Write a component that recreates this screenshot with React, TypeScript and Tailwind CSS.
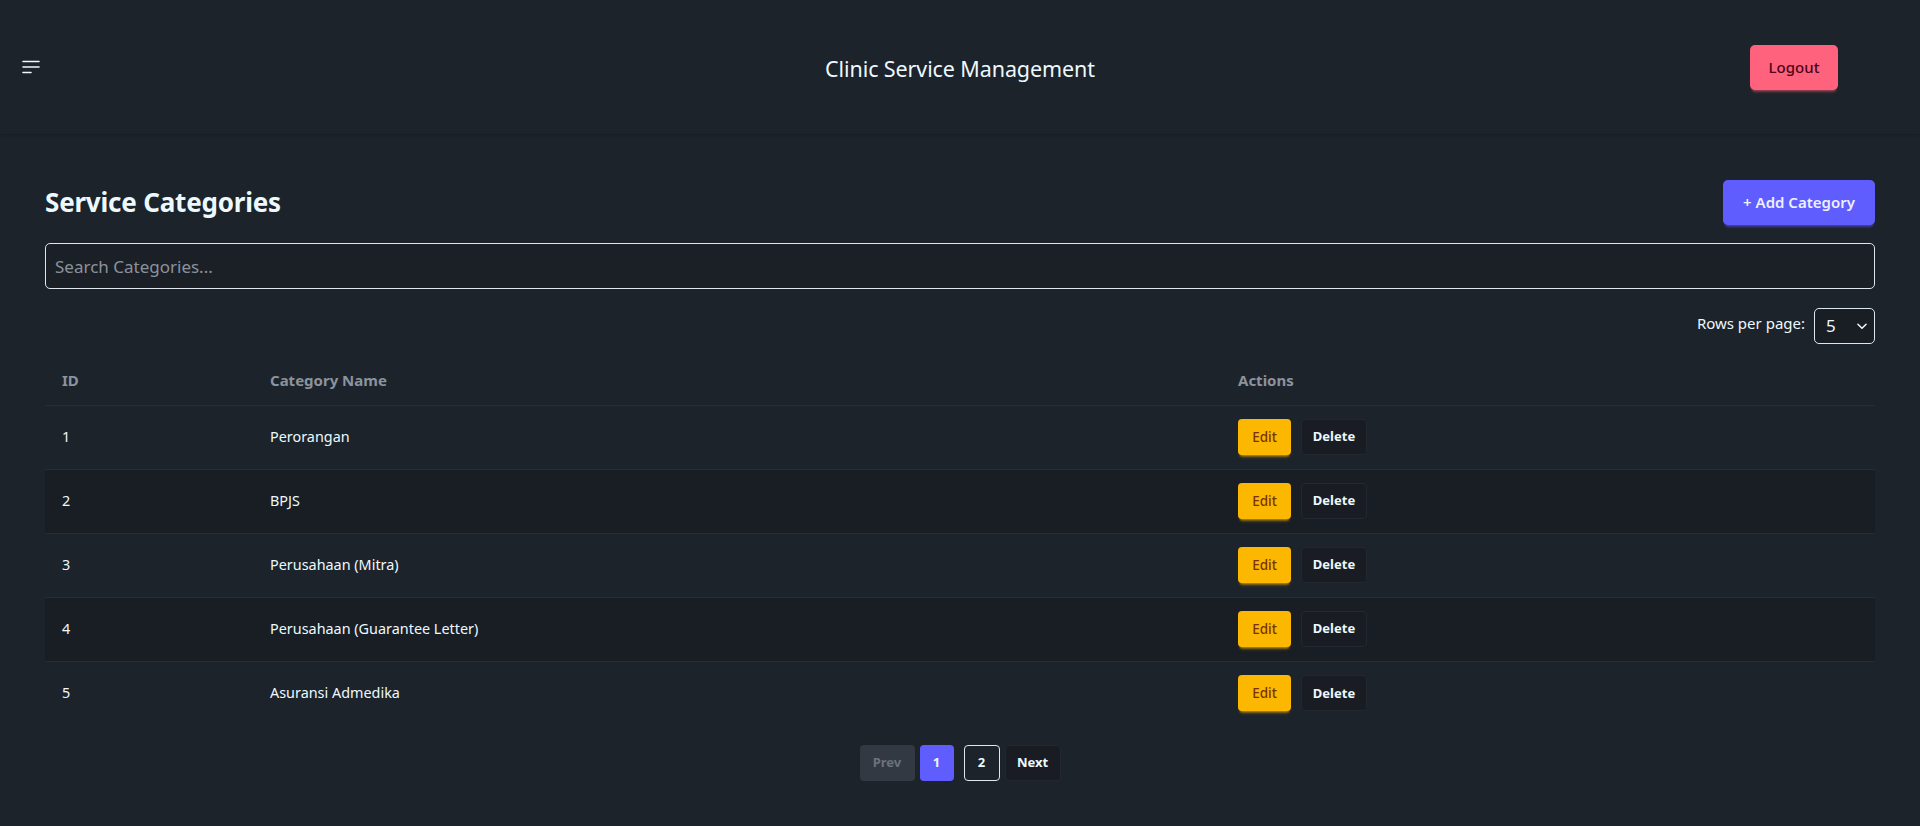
import React from "react";

const rows = [
  { id: 1, name: "Perorangan" },
  { id: 2, name: "BPJS" },
  { id: 3, name: "Perusahaan (Mitra)" },
  { id: 4, name: "Perusahaan (Guarantee Letter)" },
  { id: 5, name: "Asuransi Admedika" },
];

const App = () => {
  return (
    <div
      className="min-h-[826px] w-full bg-[#1d232a] text-[#ecf9ff]"
      style={{ fontFamily: '"Noto Sans", "Open Sans", sans-serif' }}
    >
      {/* NAVBAR */}
      <header className="relative z-10 flex h-[134px] items-center justify-between bg-[#1d232a] pl-[22px] pr-[82px] shadow-[0_1px_3px_rgba(0,0,0,0.2)]">
        <button className="flex h-[20px] w-[20px] items-center">
          <svg width="18" height="14" viewBox="0 0 18 14" fill="none">
            <path d="M1 1.5h16M1 7h16M1 12.5h8" stroke="#ecf9ff" strokeWidth="1.6" strokeLinecap="round" />
          </svg>
        </button>
        <h1 className="absolute left-1/2 top-[53px] -translate-x-1/2 text-[21.5px] font-normal tracking-[-0.1px]">
          Clinic Service Management
        </h1>
        <button className="h-[45px] w-[88px] rounded-[5px] bg-[#ff627d] text-[15px] font-medium text-[#4d0218] shadow-[0_3px_2px_-2px_rgba(255,98,125,0.35),0_4px_3px_-2px_rgba(255,98,125,0.35)]">
          Logout
        </button>
      </header>

      {/* CONTENT */}
      <main className="px-[45px] pt-[46px]">
        <div className="flex items-center justify-between">
          <h2 className="text-[26px] font-bold tracking-[-0.2px]">Service Categories</h2>
          <button className="h-[45px] w-[152px] rounded-[5px] bg-[#605dff] text-[15px] font-semibold text-[#edf1fe] shadow-[0_3px_2px_-2px_rgba(96,93,255,0.4),0_4px_3px_-2px_rgba(96,93,255,0.4)]">
            + Add Category
          </button>
        </div>

        <input
          type="text"
          placeholder="Search Categories..."
          className="mt-[18px] block h-[46px] w-full rounded-[5px] border border-[#dfe6ee] bg-[#1b2027] px-[9px] text-[17px] text-[#ecf9ff] outline-none placeholder:text-[#8b929c]"
        />

        <div className="mt-[19px] flex items-center justify-end gap-[9px]">
          <span className="mb-[6px] text-[15px]">Rows per page:</span>
          <div className="flex h-[36px] w-[61px] items-center justify-between rounded-[5px] border border-[#dfe6ee] bg-[#191e24] pl-[11px] pr-[5px]">
            <span className="text-[17px]">5</span>
            <svg width="14" height="14" viewBox="0 0 24 24" fill="none">
              <path d="M5 9l7 7 7-7" stroke="#ecf9ff" strokeWidth="2.6" strokeLinecap="round" strokeLinejoin="round" />
            </svg>
          </div>
        </div>

        {/* TABLE */}
        <table className="mt-[12px] w-full border-collapse text-left">
          <thead>
            <tr className="h-[49px] border-b border-[#272d35] text-[15px] font-bold text-[#8a939f]">
              <th className="w-[208px] px-[17px]">ID</th>
              <th className="w-[968px] px-[17px]">Category Name</th>
              <th className="px-[17px]">Actions</th>
            </tr>
          </thead>
          <tbody className="text-[14.4px]">
            {rows.map((r, i) => (
              <tr
                key={r.id}
                className={`h-[64px] ${i < rows.length - 1 ? "border-b border-[#272d35]" : ""} ${i % 2 === 1 ? "bg-[#191e24]" : "bg-[#1d232a]"}`}
              >
                <td className="px-[17px]">{r.id}</td>
                <td className="px-[17px]">{r.name}</td>
                <td className="px-[17px]">
                  <div className="flex items-center gap-[10px]">
                    <button className="h-[36px] w-[53px] rounded-[4px] bg-[#fcb700] text-[13.5px] font-medium text-[#793205] shadow-[0_3px_2px_-2px_rgba(252,183,0,0.45),0_4px_3px_-2px_rgba(252,183,0,0.45)]">
                      Edit
                    </button>
                    <button className="h-[36px] w-[66px] rounded-[4px] border border-[#222830] bg-[#191d23] text-[13px] font-bold text-[#ecf9ff]">
                      Delete
                    </button>
                  </div>
                </td>
              </tr>
            ))}
          </tbody>
        </table>

        {/* PAGINATION */}
        <div className="mt-[20px] flex items-center justify-center gap-[5px]">
          <button className="h-[36px] w-[55px] rounded-[4px] bg-[#333942] text-[13px] font-bold text-[#6b727c]">
            Prev
          </button>
          <button className="h-[36px] w-[34px] rounded-[4px] bg-[#605dff] text-[13px] font-bold text-[#edf1fe]">
            1
          </button>
          <button className="ml-[5px] h-[36px] w-[36px] rounded-[4px] border border-[#dfe6ee] bg-[#1d232a] text-[13px] font-bold text-[#ecf9ff]">
            2
          </button>
          <button className="h-[36px] w-[56px] rounded-[4px] border border-[#222830] bg-[#191d23] text-[13px] font-bold text-[#ecf9ff]">
            Next
          </button>
        </div>
      </main>
    </div>
  );
};

export default App;
